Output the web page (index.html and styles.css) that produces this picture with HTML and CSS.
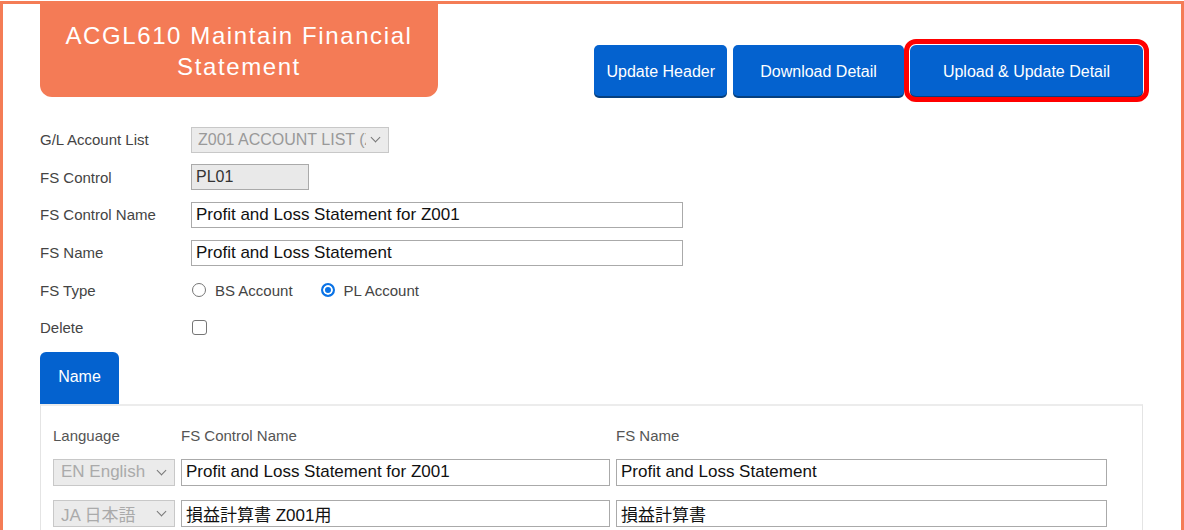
FILE: index.html
```html
<!DOCTYPE html>
<html lang="en">
<head>
    <meta charset="UTF-8">
    <title>ACGL610 Maintain Financial Statement</title>
    <link rel="stylesheet" href="styles.css">
</head>
<body>
    <div class="page">
        <div class="header">
            <h1 class="title">ACGL610 Maintain Financial<br>Statement</h1>
            <div class="actions">
                <button class="btn">Update Header</button>
                <button class="btn btn-wide">Download Detail</button>
                <button class="btn btn-upload">Upload &amp; Update Detail</button>
            </div>
        </div>

        <div class="form">
            <label>G/L Account List</label>
            <div class="field">
                <div class="select select-gl">
                    <span class="select-text">Z001 ACCOUNT LIST (Z001)</span>
                    <span class="chevron"></span>
                </div>
            </div>

            <label>FS Control</label>
            <div class="field"><input class="input input-readonly input-short" value="PL01" readonly></div>

            <label>FS Control Name</label>
            <div class="field"><input class="input input-long" value="Profit and Loss Statement for Z001"></div>

            <label>FS Name</label>
            <div class="field"><input class="input input-long" value="Profit and Loss Statement"></div>

            <label>FS Type</label>
            <div class="field radios">
                <span class="radio"></span><span class="radio-label">BS Account</span>
                <span class="radio radio-on"></span><span class="radio-label">PL Account</span>
            </div>

            <label>Delete</label>
            <div class="field"><span class="checkbox"></span></div>
        </div>

        <div class="tabs">
            <div class="tab">Name</div>
        </div>
        <div class="tab-body">
            <div class="name-grid">
                <div class="col-head">Language</div>
                <div class="col-head">FS Control Name</div>
                <div class="col-head">FS Name</div>

                <div class="select select-lang">
                    <span class="select-text">EN English</span>
                    <span class="chevron"></span>
                </div>
                <input class="input" value="Profit and Loss Statement for Z001">
                <input class="input" value="Profit and Loss Statement">

                <div class="select select-lang">
                    <span class="select-text">JA 日本語</span>
                    <span class="chevron"></span>
                </div>
                <input class="input" value="損益計算書 Z001用">
                <input class="input" value="損益計算書">
            </div>
        </div>
    </div>
</body>
</html>
```

FILE: styles.css
```css
body {
    margin: 0;
    background: #fff;
    font-family: "Liberation Sans", Arial, "Noto Sans CJK JP", sans-serif;
    color: #444;
    overflow: hidden;
}
.page {
    margin-top: 1px;
    height: 529px;
    box-sizing: border-box;
    overflow: hidden;
    border: 3px solid #f47c56;
    border-bottom: none;
    padding: 0 38px 0 37px;
}
.header {
    display: flex;
    justify-content: space-between;
    align-items: flex-start;
}
.title {
    margin: 0;
    width: 398px;
    height: 93px;
    padding-top: 16px;
    box-sizing: border-box;
    background: #f47b56;
    border-radius: 0 0 12px 12px;
    color: #fff;
    font-weight: normal;
    font-size: 24px;
    line-height: 31px;
    letter-spacing: 1.6px;
    text-align: center;
}
.actions {
    display: flex;
    gap: 6px;
    margin-top: 41px;
}
.btn {
    height: 51px;
    padding: 3px 12px 0;
    border: none;
    border-radius: 5px;
    background: #0462cf;
    box-shadow: 0 2px 0 #06407f;
    color: #fff;
    font-family: "Liberation Sans", Arial, sans-serif;
    font-size: 16px;
    cursor: pointer;
}
.btn-wide {
    width: 171px;
}
.btn-upload {
    width: 233px;
    outline: 5px solid #f00;
    outline-offset: 1px;
    border-radius: 6px;
}
.form {
    display: grid;
    grid-template-columns: 151px 1fr;
    grid-auto-rows: 37.6px;
    align-items: center;
    margin-top: 24px;
    font-size: 15px;
}
.form label {
    color: #444;
}
.field {
    display: flex;
    align-items: center;
}
.input {
    height: 26px;
    box-sizing: border-box;
    border: 1px solid #aaa;
    padding: 0 4px;
    font-family: "Liberation Sans", Arial, "Noto Sans CJK JP", sans-serif;
    font-size: 17px;
    color: #111;
    background: #fff;
}
.input-short {
    width: 118px;
}
.input-long {
    width: 492px;
}
.input-readonly {
    background: #e9e9e9;
    color: #333;
    font-size: 16px;
}
.select {
    display: flex;
    align-items: center;
    height: 26px;
    box-sizing: border-box;
    border: 1px solid #c8c8c8;
    background: #ebebeb;
    color: #999;
    font-size: 16px;
    padding-left: 6px;
    overflow: hidden;
}
.select-gl {
    width: 198px;
}
.select-text {
    flex: 1;
    white-space: nowrap;
    overflow: hidden;
}
.chevron {
    flex: none;
    width: 6px;
    height: 6px;
    margin: 0 9px 4px 6px;
    border-right: 1.5px solid #777;
    border-bottom: 1.5px solid #777;
    transform: rotate(45deg);
}
.radios {
    padding-left: 1px;
}
.radio {
    width: 14px;
    height: 14px;
    box-sizing: border-box;
    border: 1px solid #767676;
    border-radius: 50%;
    background: #fff;
}
.radio-on {
    border: 2px solid #0a73e6;
    box-shadow: inset 0 0 0 2px #fff;
    background: #0a73e6;
}
.radio-label {
    margin-left: 9px;
    margin-right: 28px;
}
.checkbox {
    width: 13px;
    height: 13px;
    border: 1px solid #767676;
    border-radius: 3px;
    background: #fff;
    margin-left: 1px;
}
.tabs {
    display: flex;
    margin-top: 5px;
}
.tab {
    width: 79px;
    height: 52px;
    line-height: 50px;
    background: #0462cf;
    border-radius: 6px 6px 0 0;
    color: #fff;
    font-size: 16px;
    text-align: center;
}
.tab-body {
    border: 1px solid #e4e4e4;
    border-top: 2px solid #ececec;
    padding: 21px 35px 20px 12px;
    height: 200px;
}
.name-grid {
    display: grid;
    grid-template-columns: 122px 429px 491px;
    grid-template-rows: 32px 41px 41px;
    column-gap: 6px;
    align-items: start;
    font-size: 15px;
}
.name-grid .col-head {
    color: #555;
}
.name-grid .input {
    width: 100%;
    height: 27px;
}
.select-lang {
    height: 27px;
    padding-left: 7px;
    font-size: 17px;
    color: #aaa;
}
```
